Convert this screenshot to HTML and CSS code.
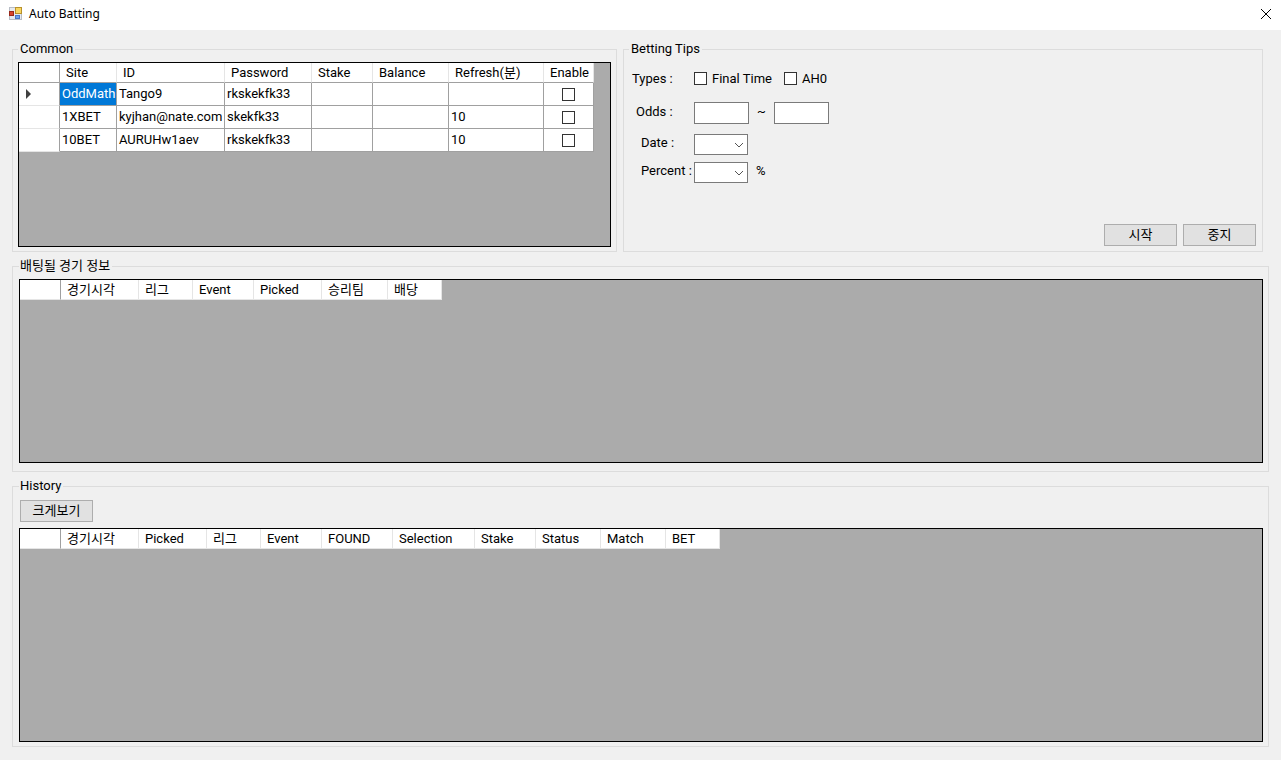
FILE: index.html
```html
<!DOCTYPE html>
<html lang="ko">
<head>
<meta charset="utf-8">
<title>Auto Batting</title>
<link rel="stylesheet" href="styles.css">
</head>
<body>
<header class="titlebar">
  <svg class="app-icon" width="16" height="16" viewBox="0 0 16 16" aria-hidden="true">
    <rect x="1.500" y="1.500" width="12" height="12" fill="#e6eaf0" stroke="#b8bdc6"/>
    <rect x="7.500" y="1.500" width="6" height="6" fill="#f8d660" stroke="#b8912c"/>
    <rect x="1.500" y="5.500" width="4" height="4" fill="#d8452c" stroke="#98291a"/>
    <rect x="7.500" y="9.500" width="4" height="3" fill="#6ea2ee" stroke="#4a78c6"/>
  </svg>
  <h1 class="title">Auto Batting</h1>
  <button class="close" type="button" aria-label="Close">
    <svg width="12" height="12" viewBox="0 0 12 12" aria-hidden="true"><path d="M1 1 11 11M11 1 1 11" stroke="#000" fill="none"/></svg>
  </button>
</header>
<main class="form">
  <div class="top">
    <fieldset class="group">
      <legend>Common</legend>
      <div class="data-grid sites">
        <table>
          <colgroup><col class="w41"><col class="w57"><col class="w108"><col class="w87"><col class="w61"><col class="w76"><col class="w95"><col class="w50"></colgroup>
          <thead><tr><th class="corner"></th><th>Site</th><th>ID</th><th>Password</th><th>Stake</th><th>Balance</th><th>Refresh(분)</th><th>Enable</th></tr></thead>
          <tbody>
            <tr><th class="row-head"><svg width="5" height="10" viewBox="0 0 5 10" aria-hidden="true"><path d="M0 0 5 5 0 10Z" fill="#404040"/></svg></th><td class="selected">OddMath</td><td>Tango9</td><td>rkskekfk33</td><td></td><td></td><td></td><td class="tick"><input class="check" type="checkbox" aria-label="Enable OddMath"></td></tr>
            <tr><th class="row-head"></th><td>1XBET</td><td>kyjhan@nate.com</td><td>skekfk33</td><td></td><td></td><td>10</td><td class="tick"><input class="check" type="checkbox" aria-label="Enable 1XBET"></td></tr>
            <tr><th class="row-head"></th><td>10BET</td><td>AURUHw1aev</td><td>rkskekfk33</td><td></td><td></td><td>10</td><td class="tick"><input class="check" type="checkbox" aria-label="Enable 10BET"></td></tr>
          </tbody>
        </table>
      </div>
    </fieldset>
    <fieldset class="group tips">
      <legend>Betting Tips</legend>
      <div class="field types">
        <span class="label">Types :</span>
        <label class="option"><input class="check" type="checkbox">Final Time</label>
        <label class="option"><input class="check" type="checkbox">AH0</label>
      </div>
      <div class="field odds">
        <label class="label indent-small" for="odds-from">Odds :</label>
        <input class="box" id="odds-from" type="text">
        <label class="unit" for="odds-to">~</label>
        <input class="box" id="odds-to" type="text">
      </div>
      <div class="field date">
        <label class="label indent" for="date">Date :</label>
        <span class="combo"><select id="date"><option></option></select><svg width="10" height="6" viewBox="0 0 10 6" aria-hidden="true"><path d="M1 1 5 5 9 1" fill="none" stroke="#555"/></svg></span>
      </div>
      <div class="field percent">
        <label class="label indent" for="percent">Percent :</label>
        <span class="combo"><select id="percent"><option></option></select><svg width="10" height="6" viewBox="0 0 10 6" aria-hidden="true"><path d="M1 1 5 5 9 1" fill="none" stroke="#555"/></svg></span>
        <span class="unit">%</span>
      </div>
      <div class="actions">
        <button class="button" type="button">시작</button>
        <button class="button" type="button">중지</button>
      </div>
    </fieldset>
  </div>
  <fieldset class="group wide">
    <legend>배팅될 경기 정보</legend>
    <div class="data-grid matches">
      <table class="empty">
        <colgroup><col class="w41"><col class="w78"><col class="w54"><col class="w61"><col class="w68"><col class="w66"><col class="w54"></colgroup>
        <thead><tr><th class="corner"></th><th>경기시각</th><th>리그</th><th>Event</th><th>Picked</th><th>승리팀</th><th>배당</th></tr></thead>
      </table>
    </div>
  </fieldset>
  <fieldset class="group wide history">
    <legend>History</legend>
    <button class="button" type="button">크게보기</button>
    <div class="data-grid bets">
      <table class="empty">
        <colgroup><col class="w41"><col class="w78"><col class="w68"><col class="w54"><col class="w61"><col class="w71"><col class="w82"><col class="w61"><col class="w65"><col class="w65"><col class="w54"></colgroup>
        <thead><tr><th class="corner"></th><th>경기시각</th><th>Picked</th><th>리그</th><th>Event</th><th>FOUND</th><th>Selection</th><th>Stake</th><th>Status</th><th>Match</th><th>BET</th></tr></thead>
      </table>
    </div>
  </fieldset>
</main>
</body>
</html>
```
FILE: styles.css
```css
* { box-sizing: border-box; }

body {
  margin: 0;
  min-height: 100vh;
  display: flex;
  flex-direction: column;
  background: #f0f0f0;
  color: #000;
  font: 13px/15px Roboto, "Noto Sans CJK KR", sans-serif;
}

button, input, select { font: inherit; color: inherit; margin: 0; }

.titlebar {
  display: flex;
  align-items: center;
  height: 30px;
  padding: 0 8px 2px;
  background: #fff;
}
.app-icon { margin-right: 5px; }
.title {
  flex: 1;
  margin: 0;
  font: 12px/16px "Noto Sans", "Noto Sans CJK KR", sans-serif;
}
.close {
  display: flex;
  padding: 0;
  margin-right: 1px;
  border: 0;
  background: none;
}

.form {
  flex: 1;
  display: grid;
  grid-template-rows: auto auto 1fr;
  gap: 6px;
  padding: 11px 12px 13px;
}
.top {
  display: grid;
  grid-template-columns: 605px 1fr;
  gap: 6px;
  padding-right: 6px;
}

.group {
  display: flex;
  flex-direction: column;
  min-width: 0;
  margin: 0;
  padding: 4px 5px;
  border: 1px solid #dcdcdc;
}
.group legend { padding: 0 2px 2px; line-height: 15px; }
.wide { padding: 4px 5px 8px 6px; }
.wide legend { padding-left: 1px; }
.history { padding-top: 5px; padding-bottom: 4px; }

.data-grid {
  border: 1px solid #000;
  background: #ababab;
  overflow: hidden;
}
.sites { flex: 1; min-height: 185px; }
.matches { min-height: 184px; }
.bets { flex: 1; margin-top: 6px; }

table { table-layout: fixed; border-collapse: separate; border-spacing: 0; width: min-content; }
th, td {
  overflow: hidden;
  padding: 0 2px;
  border: solid #a0a0a0;
  border-width: 0 1px 1px 0;
  background: #fff;
  font-weight: 400;
  text-align: left;
  white-space: nowrap;
}
thead th { height: 20px; padding: 0 0 0 6px; border-right-color: #e5e5e5; }
thead .corner { border-right-color: #a0a0a0; }
.empty thead th { border-bottom-color: #e5e5e5; }
tbody tr { height: 23px; }
tbody td { padding-bottom: 2px; }
tbody .row-head { padding-left: 7px; border-bottom-color: #e5e5e5; }
.row-head svg { display: block; }
td.selected { background: #0078d7; color: #fff; }
td.tick { padding: 0; }
.tick .check { display: block; margin: 0 auto; }

.w41 { width: 41px; }
.w50 { width: 50px; }
.w54 { width: 54px; }
.w57 { width: 57px; }
.w61 { width: 61px; }
.w65 { width: 65px; }
.w66 { width: 66px; }
.w68 { width: 68px; }
.w71 { width: 71px; }
.w76 { width: 76px; }
.w78 { width: 78px; }
.w82 { width: 82px; }
.w87 { width: 87px; }
.w95 { width: 95px; }
.w108 { width: 108px; }

.check {
  appearance: none;
  width: 13px;
  height: 13px;
  border: 1px solid #333;
  background: #fff;
}
.check:checked { background: #333; box-shadow: inset 0 0 0 2px #fff; }

.tips { padding: 9px 6px 5px 8px; }
.tips legend { margin-left: -3px; }
.field { display: flex; align-items: center; }
.types { height: 22px; }
.odds { margin-top: 13px; }
.date { margin-top: 10px; }
.percent { margin-top: 7px; }
.label { width: 62px; padding-bottom: 4px; white-space: nowrap; }
.types .label { padding-bottom: 0; }
.indent-small { padding-left: 4px; }
.indent { padding-left: 9px; }
.option { display: flex; align-items: center; gap: 5px; margin-right: 12px; }
.box {
  width: 55px;
  height: 22px;
  padding: 0 3px;
  border: 1px solid #7a7a7a;
  background: #fff;
}
.unit { width: 25px; padding: 0 0 4px 8px; }
.combo { position: relative; display: flex; }
.combo select {
  appearance: none;
  width: 54px;
  height: 21px;
  padding: 0 3px;
  border: 1px solid #7a7a7a;
  border-radius: 0;
  background: #fff;
}
.combo svg { position: absolute; right: 4px; top: 8px; pointer-events: none; }

.actions { display: flex; justify-content: flex-end; gap: 6px; margin-top: auto; }
.button {
  align-self: flex-start;
  width: 73px;
  height: 22px;
  padding: 0 0 2px;
  border: 1px solid #adadad;
  background: #e1e1e1;
}
.history .button { margin-left: 1px; }
```
